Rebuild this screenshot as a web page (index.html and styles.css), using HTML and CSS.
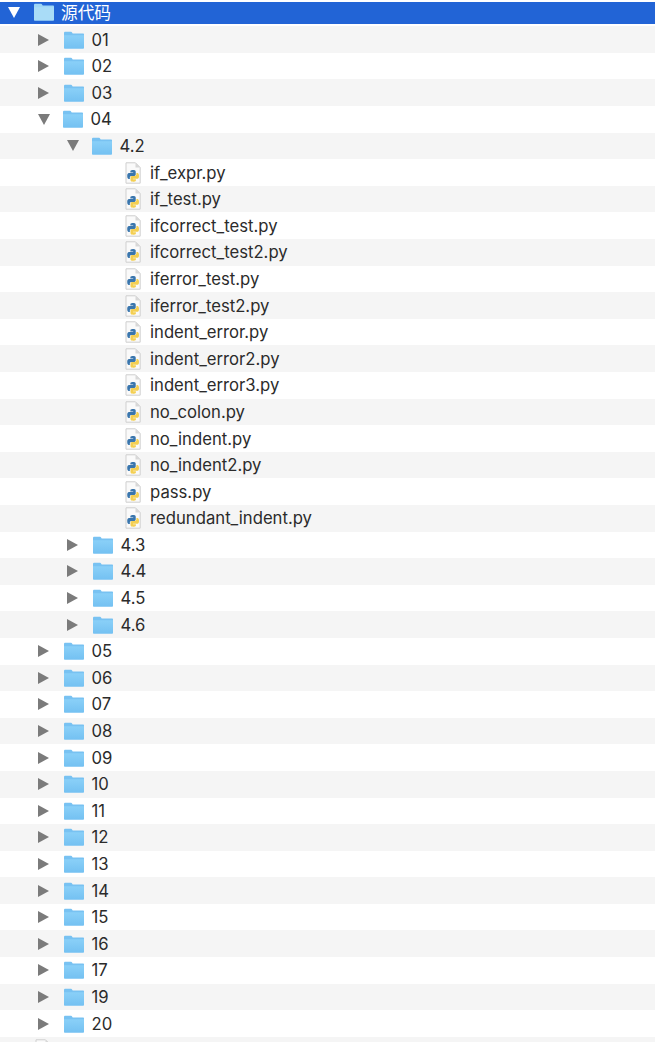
FILE: index.html
```html
<!DOCTYPE html>
<html lang="zh">
<head>
<meta charset="utf-8">
<title>源代码</title>
<link rel="stylesheet" href="styles.css">
</head>
<body>
<svg class="defs" width="0" height="0" aria-hidden="true">
  <defs>
    <linearGradient id="fg" x1="0" y1="0" x2="0" y2="1"><stop offset="0" stop-color="#8ad0f8"/><stop offset="1" stop-color="#74c1f2"/></linearGradient>
    <symbol id="folder" viewBox="0 0 22 18">
      <path d="M1 2.2C1 1.3 1.5.8 2.4.8H7.6C8.4.8 8.8 1.1 9.2 1.8L9.7 2.6H20C20.6 2.6 21 3 21 3.6V16.4C21 17 20.6 17.4 20 17.4H2C1.4 17.4 1 17 1 16.4Z" fill="#78c2f2"/>
      <path d="M1 4.2H21V16.4C21 17 20.6 17.4 20 17.4H2C1.4 17.4 1 17 1 16.4Z" fill="url(#fg)"/>
    </symbol>
    <symbol id="folder-sel" viewBox="0 0 22 18">
      <path d="M1 2.2C1 1.3 1.5.8 2.4.8H7.6C8.4.8 8.8 1.1 9.2 1.8L9.7 2.6H20C20.6 2.6 21 3 21 3.6V16.4C21 17 20.6 17.4 20 17.4H2C1.4 17.4 1 17 1 16.4Z" fill="#9ed6f6"/>
      <path d="M1 4.2H21V16.4C21 17 20.6 17.4 20 17.4H2C1.4 17.4 1 17 1 16.4Z" fill="#a9dcf7"/>
    </symbol>
    <symbol id="pyfile" viewBox="0 0 18 22">
      <path d="M2 .8H11.5L16.2 5.5V21.2H2Z" fill="#fafafa" stroke="#cfcfcf" stroke-width="1"/>
      <path d="M11.5 .8V5.5H16.2Z" fill="#d8d8d8"/>
      <g transform="translate(2.4 7.2) scale(.84)">
        <path d="M8 1C4.5 1 4.7 2.5 4.7 2.5V4H8.1V4.5H3.2S1 4.3 1 8s1.9 3.6 1.9 3.6H4.1V9.9S4 8 6 8H9.3S11.1 8 11.1 6.2V3S11.4 1 8 1Z" fill="#3a76ad"/>
        <path d="M8 1C4.5 1 4.7 2.5 4.7 2.5V4H8.1V4.5H3.2S1 4.3 1 8s1.9 3.6 1.9 3.6H4.1V9.9S4 8 6 8H9.3S11.1 8 11.1 6.2V3S11.4 1 8 1Z" fill="#f4cf52" transform="rotate(180 8 8)"/>
      </g>
    </symbol>
  </defs>
</svg>
<main class="tree">
  <div class="row selected"><span class="arrow down white"></span><svg class="folder"><use href="#folder-sel"/></svg><span class="name">源代码</span></div>
  <div class="row odd l1"><span class="arrow"></span><svg class="folder"><use href="#folder"/></svg><span class="name">01</span></div>
  <div class="row l1"><span class="arrow"></span><svg class="folder"><use href="#folder"/></svg><span class="name">02</span></div>
  <div class="row odd l1"><span class="arrow"></span><svg class="folder"><use href="#folder"/></svg><span class="name">03</span></div>
  <div class="row l1"><span class="arrow down"></span><svg class="folder"><use href="#folder"/></svg><span class="name">04</span></div>
  <div class="row odd l2"><span class="arrow down"></span><svg class="folder"><use href="#folder"/></svg><span class="name">4.2</span></div>
  <div class="row l3"><svg class="file"><use href="#pyfile"/></svg><span class="name">if_expr.py</span></div>
  <div class="row odd l3"><svg class="file"><use href="#pyfile"/></svg><span class="name">if_test.py</span></div>
  <div class="row l3"><svg class="file"><use href="#pyfile"/></svg><span class="name">ifcorrect_test.py</span></div>
  <div class="row odd l3"><svg class="file"><use href="#pyfile"/></svg><span class="name">ifcorrect_test2.py</span></div>
  <div class="row l3"><svg class="file"><use href="#pyfile"/></svg><span class="name">iferror_test.py</span></div>
  <div class="row odd l3"><svg class="file"><use href="#pyfile"/></svg><span class="name">iferror_test2.py</span></div>
  <div class="row l3"><svg class="file"><use href="#pyfile"/></svg><span class="name">indent_error.py</span></div>
  <div class="row odd l3"><svg class="file"><use href="#pyfile"/></svg><span class="name">indent_error2.py</span></div>
  <div class="row l3"><svg class="file"><use href="#pyfile"/></svg><span class="name">indent_error3.py</span></div>
  <div class="row odd l3"><svg class="file"><use href="#pyfile"/></svg><span class="name">no_colon.py</span></div>
  <div class="row l3"><svg class="file"><use href="#pyfile"/></svg><span class="name">no_indent.py</span></div>
  <div class="row odd l3"><svg class="file"><use href="#pyfile"/></svg><span class="name">no_indent2.py</span></div>
  <div class="row l3"><svg class="file"><use href="#pyfile"/></svg><span class="name">pass.py</span></div>
  <div class="row odd l3"><svg class="file"><use href="#pyfile"/></svg><span class="name">redundant_indent.py</span></div>
  <div class="row l2"><span class="arrow"></span><svg class="folder"><use href="#folder"/></svg><span class="name">4.3</span></div>
  <div class="row odd l2"><span class="arrow"></span><svg class="folder"><use href="#folder"/></svg><span class="name">4.4</span></div>
  <div class="row l2"><span class="arrow"></span><svg class="folder"><use href="#folder"/></svg><span class="name">4.5</span></div>
  <div class="row odd l2"><span class="arrow"></span><svg class="folder"><use href="#folder"/></svg><span class="name">4.6</span></div>
  <div class="row l1"><span class="arrow"></span><svg class="folder"><use href="#folder"/></svg><span class="name">05</span></div>
  <div class="row odd l1"><span class="arrow"></span><svg class="folder"><use href="#folder"/></svg><span class="name">06</span></div>
  <div class="row l1"><span class="arrow"></span><svg class="folder"><use href="#folder"/></svg><span class="name">07</span></div>
  <div class="row odd l1"><span class="arrow"></span><svg class="folder"><use href="#folder"/></svg><span class="name">08</span></div>
  <div class="row l1"><span class="arrow"></span><svg class="folder"><use href="#folder"/></svg><span class="name">09</span></div>
  <div class="row odd l1"><span class="arrow"></span><svg class="folder"><use href="#folder"/></svg><span class="name">10</span></div>
  <div class="row l1"><span class="arrow"></span><svg class="folder"><use href="#folder"/></svg><span class="name">11</span></div>
  <div class="row odd l1"><span class="arrow"></span><svg class="folder"><use href="#folder"/></svg><span class="name">12</span></div>
  <div class="row l1"><span class="arrow"></span><svg class="folder"><use href="#folder"/></svg><span class="name">13</span></div>
  <div class="row odd l1"><span class="arrow"></span><svg class="folder"><use href="#folder"/></svg><span class="name">14</span></div>
  <div class="row l1"><span class="arrow"></span><svg class="folder"><use href="#folder"/></svg><span class="name">15</span></div>
  <div class="row odd l1"><span class="arrow"></span><svg class="folder"><use href="#folder"/></svg><span class="name">16</span></div>
  <div class="row l1"><span class="arrow"></span><svg class="folder"><use href="#folder"/></svg><span class="name">17</span></div>
  <div class="row odd l1"><span class="arrow"></span><svg class="folder"><use href="#folder"/></svg><span class="name">19</span></div>
  <div class="row l1"><span class="arrow"></span><svg class="folder"><use href="#folder"/></svg><span class="name">20</span></div>
  <div class="row odd l0"><svg class="file"><use href="#pyfile"/></svg></div>
</main>
</body>
</html>
```
FILE: styles.css
```css
html, body { margin: 0; padding: 0; background: #fff; }
body { width: 655px; height: 1042px; overflow: hidden; font-family: "Inter", "Liberation Sans", "Noto Sans CJK SC", sans-serif; color: #2b2b2b; }
.defs { position: absolute; }
.tree { display: flex; flex-direction: column; padding-top: 2px; }
.row { flex: none; box-sizing: border-box; height: 26.6px; display: flex; align-items: center; font-size: 16.7px; white-space: nowrap; overflow: hidden; }
.odd { background: #f5f5f5; }
.selected { height: 22px; margin-bottom: 2.3px; padding: 0 0 2px 8px; background: #2264d6; color: #fff; }
.l0 { padding-left: 34px; }
.l1 { padding-left: 38px; }
.l2 { padding-left: 67px; }
.l3 { padding-left: 124px; }
.arrow { width: 0; height: 0; border-style: solid; border-width: 6.5px 0 6.5px 11px; border-color: transparent transparent transparent #7b7b7b; margin: 0 14px 0 0; filter: blur(.3px); }
.arrow.down { border-width: 11px 6.5px 0 6.5px; border-color: #7b7b7b transparent transparent transparent; margin: 0 12px 0 0; }
.arrow.white { border-top-color: #fff; margin: 0 12.5px 0 0; }
.folder { width: 22px; height: 18px; margin-right: 6.5px; filter: blur(.3px); }
.file { width: 18px; height: 22px; margin-right: 8px; filter: blur(.35px); }
```
